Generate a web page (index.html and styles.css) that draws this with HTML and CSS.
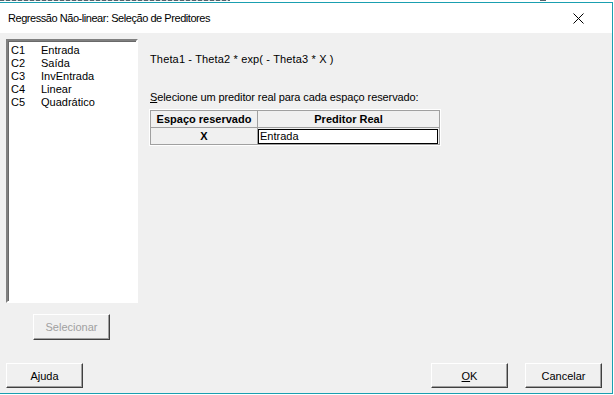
FILE: index.html
```html
<!DOCTYPE html>
<html lang="pt">
<head>
  <meta charset="UTF-8">
  <title>Regressão Não-linear: Seleção de Preditores</title>
  <link rel="stylesheet" href="styles.css">
</head>
<body>
  <div class="behind"></div>
  <div class="window">
    <div class="titlebar">
      <span class="title">Regressão Não-linear: Seleção de Preditores</span>
      <svg class="close" width="11" height="11" viewBox="0 0 11 11">
        <path d="M0.5 0.5 L10.5 10.5 M10.5 0.5 L0.5 10.5" stroke="#000" stroke-width="1" fill="none"/>
      </svg>
    </div>

    <div class="content">
      <div class="main">
        <div class="left">
          <div class="listbox">
            <div class="item"><span class="col">C1</span>Entrada</div>
            <div class="item"><span class="col">C2</span>Saída</div>
            <div class="item"><span class="col">C3</span>InvEntrada</div>
            <div class="item"><span class="col">C4</span>Linear</div>
            <div class="item"><span class="col">C5</span>Quadrático</div>
          </div>
          <button class="btn select" disabled>Selecionar</button>
        </div>

        <div class="right">
          <p class="formula">Theta1 - Theta2 * exp( - Theta3 * X )</p>
          <p class="prompt"><u>S</u>elecione um preditor real para cada espaço reservado:</p>
          <table class="grid">
            <tr>
              <th class="c1">Espaço reservado</th>
              <th class="c2">Preditor Real</th>
            </tr>
            <tr>
              <th class="c1">X</th>
              <td class="c2"><div class="edit">Entrada</div></td>
            </tr>
          </table>
        </div>
      </div>

      <div class="footer">
        <button class="btn">Ajuda</button>
        <div class="spacer"></div>
        <button class="btn"><u>O</u>K</button>
        <button class="btn cancel">Cancelar</button>
      </div>
    </div>
  </div>
</body>
</html>
```

FILE: styles.css
```css
body {
  margin: 0;
  background: #fff;
  font-family: "Liberation Sans", Arial, sans-serif;
  font-size: 11px;
  color: #000;
  width: 614px;
  height: 395px;
  overflow: hidden;
}
.behind {
  height: 2px;
  background:
    repeating-linear-gradient(90deg, #56636b 0 4px, #c9d0d3 4px 6px) 0 0 / 230px 1px no-repeat,
    linear-gradient(90deg, #fff 540px, #56636b 540px 546px, #fff 546px) 0 0 / 100% 1px no-repeat,
    #fff;
}
.window {
  width: 612px;
  height: 390px;
  border-top: 1px solid #1a9fb0;
  border-right: 1px solid #1a9fb0;
  border-bottom: 1px solid #1a9fb0;
  display: flex;
  flex-direction: column;
}
.titlebar {
  height: 30px;
  background: #fff;
  display: flex;
  align-items: center;
  padding: 0 0 0 8px;
}
.title {
  font-size: 11px;
  letter-spacing: -0.45px;
  flex: 1;
}
.close {
  margin-right: 28px;
}
.content {
  flex: 1;
  background: #f0f0f0;
  display: flex;
  flex-direction: column;
  padding: 6px 6px 5px 6px;
}
.main {
  display: flex;
}
.left {
  width: 132px;
  display: flex;
  flex-direction: column;
  align-items: center;
}
.listbox {
  width: 125px;
  height: 257px;
  background: #fff;
  border: 2px solid;
  border-color: #808080 #fff #fff #808080;
  box-shadow: inset 1px 1px 0 #696969;
  padding: 3px 0 0 3px;
}
.item {
  height: 13px;
  line-height: 13px;
  white-space: nowrap;
}
.col {
  display: inline-block;
  width: 30px;
}
.btn {
  font-family: "Liberation Sans", Arial, sans-serif;
  font-size: 11px;
  color: #000;
  background: #f0f0f0;
  width: 77px;
  height: 25px;
  padding: 0;
  border: 1px solid;
  border-color: #fff #404040 #404040 #fff;
  box-shadow: inset -1px -1px 0 #a0a0a0;
}
.select {
  margin-top: 11px;
  margin-left: -1px;
  height: 26px;
  color: #a0a0a0;
}
.right {
  margin-left: 12px;
  padding-top: 14px;
}
.formula {
  margin: 0;
  line-height: 13px;
  letter-spacing: 0.15px;
}
.prompt {
  margin: 25px 0 0 0;
  line-height: 13px;
  letter-spacing: -0.1px;
}
.grid {
  margin-top: 6px;
  border-collapse: collapse;
  border: 1px solid #808080;
  outline: 1px solid #fff;
  background: #f0f0f0;
}
.grid th,
.grid td {
  border: 1px solid #a0a0a0;
  padding: 0;
  height: 16px;
  line-height: 14px;
}
.grid th {
  font-weight: bold;
  text-align: center;
}
.c1 {
  width: 106px;
}
.c2 {
  width: 181px;
}
.edit {
  background: #fff;
  border: 1px solid #000;
  height: 13px;
  line-height: 13px;
  padding-left: 1px;
  margin-right: 1px;
}
.footer {
  margin-top: auto;
  display: flex;
}
.spacer {
  flex: 1;
}
.cancel {
  margin-left: 17px;
  margin-right: 4px;
}
```
